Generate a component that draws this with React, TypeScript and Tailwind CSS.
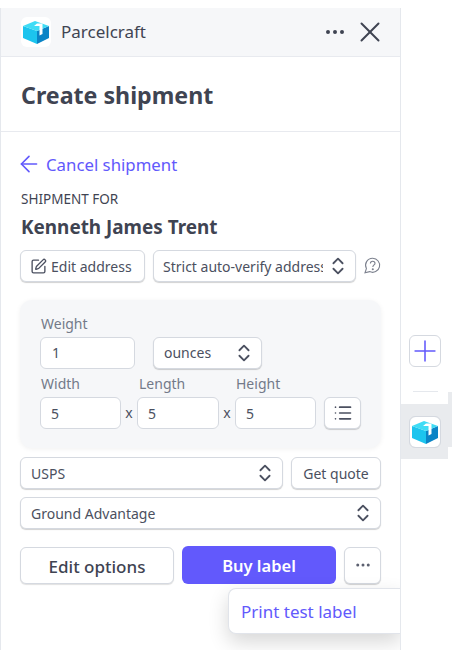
import React from 'react';
import { ArrowLeft, ChevronsUpDown, List, MoreHorizontal, Plus, SquarePen, X } from 'lucide-react';

const BoxLogo = ({ className }: { className: string }) => (
  <svg viewBox="0 0 30 30" className={className}>
    <rect width="30" height="30" rx="6" fill="#ffffff" />
    <path d="M2 9 L16 14 V27 L2 21 Z" fill="#1cc4ee" />
    <path d="M16 14 L28 9 V21 L16 27 Z" fill="#0b84c6" />
    <path d="M2 9 L14 4 L28 9 L16 14 Z" fill="#3fdcf5" />
    <path d="M16 6.5 H21.5 V17 L18.5 18.5 V9 H13 Z" fill="#ffffff" />
  </svg>
);

const UpDown = () => <ChevronsUpDown className="w-[22px] h-[22px] text-[#4b5060] shrink-0" strokeWidth={2} />;

const fieldClass =
  'h-8 bg-white border border-[#d5d9e0] rounded-md flex items-center text-sm text-[#4b5060]';
const buttonClass =
  'h-8 bg-white border border-[#d5d9e0] rounded-md shadow-[0_1px_1px_rgba(0,0,0,0.18)] flex items-center text-sm text-[#4b5060]';
const labelClass = 'text-sm leading-[20px] text-[#737a89]';

export default function App() {
  return (
    <div className="w-[452px] h-[650px] bg-white overflow-hidden pt-2 flex relative font-['Noto_Sans',sans-serif]">
      {/* Panel */}
      <div className="relative w-[401px] h-[642px] border-l border-r border-[#e5e8ed] shrink-0 overflow-hidden">
        <div className="h-[49px] bg-[#f6f7f9] border-b border-[#e8eaef] flex items-center pl-5 pr-[13px]">
          <BoxLogo className="w-[30px] h-[30px]" />
          <span className="ml-[10px] text-[17px] text-[#3f4452] flex-1">Parcelcraft</span>
          <MoreHorizontal className="w-[24px] h-[24px] text-[#3f4452] mr-[6px]" strokeWidth={2} />
          <X className="w-[34px] h-[34px] text-[#3f4452]" strokeWidth={1.4} />
        </div>

        <div className="h-[75px] border-b border-[#e8eaef] flex items-center pl-5">
          <h1 className="pt-[3px] text-[23.2px] font-bold text-[#3f4452]">Create shipment</h1>
        </div>

        <div className="pt-[20px] pl-[19px] pr-[19px]">
          <div className="flex items-center h-6 text-[#6259fc]">
            <ArrowLeft className="w-[26px] h-[26px] -ml-[4px]" strokeWidth={1.5} />
            <span className="ml-[4px] pt-[2px] text-[16.8px]">Cancel shipment</span>
          </div>
          <div className="mt-[14px] text-[13.5px] leading-[18px] text-[#3f4452] pl-[1px]">SHIPMENT FOR</div>
          <div className="mt-[6px] text-[18.9px] leading-[26px] font-bold text-[#3f4452] pl-[1px]">Kenneth James Trent</div>

          <div className="mt-[10px] flex items-center">
            <div className={`${buttonClass} w-[125px] pl-[9px]`}>
              <SquarePen className="w-[17px] h-[17px] shrink-0" strokeWidth={1.9} />
              <span className="ml-[4px] pt-[2px]">Edit address</span>
            </div>
            <div className={`${buttonClass} w-[203px] ml-2 pl-[9px] pr-[6px]`}>
              <span className="w-[160px] pt-[2px] overflow-hidden whitespace-nowrap">Strict auto-verify address</span>
              <span className="ml-auto"><UpDown /></span>
            </div>
            <svg viewBox="0 0 18 18" className="w-[18px] h-[18px] ml-[7px] text-[#7c818e]" fill="none" stroke="currentColor" strokeWidth="1.1">
              <path d="M9.7 1.3 A7 7 0 1 1 6.6 14.6 L2 15.8 L3.4 11.6 A7 7 0 0 1 9.7 1.3 Z" />
              <path d="M7.4 6.4 C7.4 5 8.5 4.3 9.7 4.3 C11 4.3 12 5.2 12 6.4 C12 7.8 9.8 8.1 9.8 10" />
              <circle cx="9.8" cy="12.2" r="0.5" />
            </svg>
          </div>

          {/* Package */}
          <div className="mt-[18px] w-[361px] h-[148px] bg-[#f6f7f9] rounded-xl shadow-[0_1px_5px_rgba(0,0,0,0.06)] px-5 pt-[14px]">
            <div className={`${labelClass} pl-px`}>Weight</div>
            <div className="flex mt-[3px] gap-[18px]">
              <div className={`${fieldClass} w-[95px] pl-[11px]`}>1</div>
              <div className={`${buttonClass} w-[109px] pl-[10px] pr-[6px] justify-between`}>
                <span>ounces</span>
                <UpDown />
              </div>
            </div>
            <div className="flex mt-[5px] pl-px">
              <div className={`${labelClass} w-[98px]`}>Width</div>
              <div className={`${labelClass} w-[97px]`}>Length</div>
              <div className={labelClass}>Height</div>
            </div>
            <div className="flex items-center mt-[3px]">
              <div className={`${fieldClass} w-[81px] pl-[10px]`}><span className="pt-[2px]">5</span></div>
              <span className="w-[16px] text-center text-sm text-[#4b5060]">x</span>
              <div className={`${fieldClass} w-[82px] pl-[10px]`}><span className="pt-[2px]">5</span></div>
              <span className="w-[16px] text-center text-sm text-[#4b5060]">x</span>
              <div className={`${fieldClass} w-[81px] pl-[10px]`}><span className="pt-[2px]">5</span></div>
              <div className={`${buttonClass} w-[37px] ml-2 justify-center`}>
                <List className="w-[20px] h-[20px]" strokeWidth={2} />
              </div>
            </div>
          </div>

          <div className="mt-[9px] flex gap-2 w-[361px]">
            <div className={`${buttonClass} flex-1 pl-[10px] pr-[6px] justify-between`}>
              <span className="pt-[2px]">USPS</span>
              <UpDown />
            </div>
            <div className={`${buttonClass} w-[90px] justify-center`}>
              <span className="pt-[2px]">Get quote</span>
            </div>
          </div>
          <div className={`${buttonClass} mt-2 w-[361px] pl-[10px] pr-[6px] justify-between`}>
            <span className="pt-[2px]">Ground Advantage</span>
            <UpDown />
          </div>

          <div className="mt-[17px] flex items-center w-[361px]">
            <div className="h-[37px] w-[154px] pt-[3px] bg-white border border-[#d5d9e0] rounded-md shadow-[0_1px_1px_rgba(0,0,0,0.12)] flex items-center justify-center text-[17px] font-medium text-[#3f4452]">
              Edit options
            </div>
            <div className="h-[38px] w-[154px] pt-[3px] ml-2 bg-[#6259fc] rounded-md flex items-center justify-center text-[16.5px] font-semibold text-white">
              Buy label
            </div>
            <div className={`${buttonClass} h-[37px] w-[37px] ml-2 justify-center`}>
              <MoreHorizontal className="w-[18px] h-[18px] text-[#5c6070]" strokeWidth={2} />
            </div>
          </div>
        </div>

        {/* Overflow menu */}
        <div className="absolute left-[227px] top-[580px] w-[173px] h-[46px] pt-[2px] bg-white border border-[#e1e4ea] border-r-0 rounded-l-lg shadow-[0_8px_20px_rgba(0,0,0,0.16)] flex items-center pl-[12px] text-[17px] text-[#6259fc]">
          Print test label
        </div>
      </div>

      {/* Side rail */}
      <div className="flex-1 pt-[327px]">
        <div className="ml-2 w-8 h-8 border border-[#d5d9e0] rounded-md flex items-center justify-center">
          <Plus className="w-[34px] h-[34px] shrink-0 text-[#6259fc]" strokeWidth={1.1} />
        </div>
        <div className="ml-3 mt-6 w-[25px] h-px bg-[#e5e8ed]" />
        <div className="mt-3 w-[47px] h-[55px] bg-[#e9ebee] flex items-center pl-2">
          <div className="w-8 h-8 rounded-md border border-[#d5d9e0] overflow-hidden">
            <BoxLogo className="w-full h-full" />
          </div>
        </div>
      </div>

      {/* Rail edge highlight */}
      <div className="absolute left-[448px] top-[392px] w-1 h-[55px] bg-[#e9ebee]" />
    </div>
  );
}
